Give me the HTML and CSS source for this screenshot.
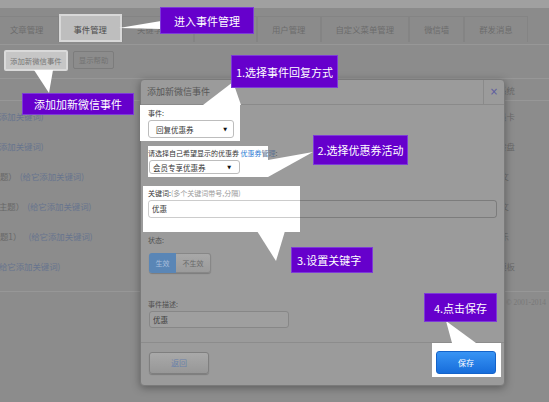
FILE: index.html
```html
<!DOCTYPE html>
<html lang="zh-CN">
<head>
<meta charset="utf-8">
<title>事件管理</title>
<link rel="stylesheet" href="styles.css">
</head>
<body>
<div class="page">
  <div class="topstrip"></div>
  <nav class="tabs">
    <span class="tab first">文章管理</span>
    <span class="tab active">事件管理</span>
    <span class="tab under">关键字</span>
    <span class="tab hidden-tab"></span>
    <span class="tab">用户管理</span>
    <span class="tab">自定义菜单管理</span>
    <span class="tab">微信墙</span>
    <span class="tab">群发消息</span>
  </nav>
  <div class="toolbar">
    <span class="btn spot">添加新微信事件</span>
    <span class="btn">显示帮助</span>
  </div>
  <div class="list">
    <div class="row head"><div class="cell-l"></div><div></div><div class="cell-r">系统</div></div>
    <div class="row"><div class="cell-l"><a class="kw in1">添加关键词)</a></div><div></div><div class="cell-r">会员卡</div></div>
    <div class="row"><div class="cell-l"><a class="kw in1">添加关键词)</a></div><div></div><div class="cell-r">大转盘</div></div>
    <div class="row"><div class="cell-l"><span class="t">题）</span><a class="kw gap">(给它添加关键词)</a></div><div></div><div class="cell-r far">图文</div></div>
    <div class="row"><div class="cell-l in1"><span class="t">主题）</span><a class="kw gap">(给它添加关键词)</a></div><div></div><div class="cell-r far">图文</div></div>
    <div class="row"><div class="cell-l"><span class="t">题1）</span><a class="kw gap wide">(给它添加关键词)</a></div><div></div><div class="cell-r far">音乐</div></div>
    <div class="row"><div class="cell-l"><a class="kw in1">给它添加关键词)</a></div><div></div><div class="cell-r">模板</div></div>
  </div>
  <div class="footer"><span class="copy">© 2001-2014</span></div>
</div>

<div class="modal">
  <div class="modal-head">
    <span class="modal-title">添加新微信事件</span>
    <span class="modal-close">×</span>
  </div>
  <div class="modal-body">
    <div class="field f1">
      <div class="flabel">事件:</div>
      <div class="select s1"><span>回复优惠券</span><span class="caret">▼</span></div>
    </div>
    <div class="field f2">
      <div class="flabel">请选择自己希望显示的优惠券 <a class="link">优惠券</a><span class="dimlink">管理</span><span class="dim">:</span></div>
      <div class="select s2"><span>会员专享优惠券</span><span class="caret">▼</span></div>
    </div>
    <div class="field f3">
      <div class="flabel">关键词:<span class="hint">(多个关键词带号,分隔)</span></div>
      <div class="input wide">优惠</div>
    </div>
    <div class="dlabel status">状态:</div>
    <div class="toggle"><span class="on">生效</span><span class="off">不生效</span></div>
    <div class="dlabel desc">事件描述:</div>
    <div class="input short">优惠</div>
  </div>
  <div class="modal-foot">
    <span class="btn-back">返回</span>
    <span class="save-spot"><span class="btn-save">保存</span></span>
  </div>
</div>

<svg class="pointers" width="549" height="402" viewBox="0 0 549 402">
  <polygon points="119,28 161,21 161,29" />
  <polygon points="34,70 53,70 49,93" />
  <polygon points="203,105 241,105 233,82" />
  <polygon points="268,160 268,177 313,152" />
  <polygon points="257,231 285,231 276,261" />
  <polygon points="446,321 452,343 476,343" />
</svg>

<div class="callout c1">进入事件管理</div>
<div class="callout c2">添加加新微信事件</div>
<div class="callout c3">1.选择事件回复方式</div>
<div class="callout c4">2.选择优惠券活动</div>
<div class="callout c5">3.设置关键字</div>
<div class="callout c6">4.点击保存</div>
</body>
</html>
```

FILE: styles.css
```css
* { box-sizing: border-box; margin: 0; padding: 0; }
html, body { width: 549px; height: 402px; overflow: hidden; }
body {
  position: relative;
  background: #8c8c8c;
  font-family: "Noto Sans CJK SC", "Noto Sans", "Liberation Sans", sans-serif;
  color: #666;
}
a { text-decoration: none; }

.page { width: 549px; height: 402px; }
.topstrip { height: 8px; background: #a0a0a0; }

.tabs {
  display: flex;
  height: 37px;
  padding-top: 8px;
  border-bottom: 1px solid #979797;
  background: #8b8b8b;
}
.tab {
  height: 26px;
  padding: 0 14px;
  border: 1px solid #848484;
  border-bottom: none;
  font-size: 8.4px;
  line-height: 25px;
  color: #6c6c6c;
  white-space: nowrap;
}
.tab.first { margin-left: -5px; }
.tab.under { width: 72px; padding-right: 0; }
.tab.hidden-tab { width: 63px; }
.tab.active {
  height: 28px;
  margin-top: -2px;
  padding: 0 13px;
  background: #bebebe;
  border: 2px solid #d8d8d8;
  color: #4c4c4c;
  line-height: 27px;
}

.toolbar {
  display: flex;
  align-items: flex-start;
  gap: 5px;
  height: 34px;
  padding: 5px 0 0 4px;
  border-bottom: 1px solid #979797;
}
.btn {
  height: 18px;
  margin-top: 1px;
  padding: 0 5px;
  border: 1px solid #7c7c7c;
  border-radius: 2px;
  font-size: 7.4px;
  line-height: 16px;
  color: #737373;
  white-space: nowrap;
}
.btn.spot {
  height: 21px;
  margin-top: 0;
  padding: 0 4px;
  background: #c6c6c6;
  border: 2px solid #dadada;
  line-height: 17px;
  color: #767676;
}

.list { padding-bottom: 10px; border-bottom: 1px solid #979797; }
.row {
  display: grid;
  grid-template-columns: 140px 300px 75px 1fr;
  height: 30px;
  align-items: center;
  font-size: 8.4px;
}
.row.head { height: 22px; border-bottom: 1px solid #979797; }
.cell-l { overflow: hidden; white-space: nowrap; }
.cell-r { text-align: right; color: #6a6a6a; white-space: nowrap; }
.cell-r.far { padding-right: 6px; }
.t { color: #686868; }
.kw { color: #67748e; }
.kw.gap { margin-left: 3px; }
.kw.wide { margin-left: 7px; }
.in1 { margin-left: -1px; }

.footer { padding: 5px 0 0 506px; font-family: "Liberation Serif", serif; font-size: 7.5px; line-height: 12px; color: #787878; white-space: nowrap; }

/* modal */
.modal {
  position: absolute;
  left: 140px;
  top: 79px;
  width: 365px;
  height: 307px;
  display: flex;
  flex-direction: column;
  background: #9b9b9b;
  border: 1px solid #7a7a7a;
  border-radius: 4px;
  box-shadow: 0 2px 8px rgba(0, 0, 0, 0.35);
}
.modal-head {
  display: flex;
  height: 25px;
  border-bottom: 1px solid #8a8a8a;
}
.modal-title { flex: 1; padding-left: 6px; font-size: 9px; line-height: 24px; color: #575757; }
.modal-close {
  width: 21px;
  border-left: 1px solid #8a8a8a;
  text-align: center;
  font-family: "DejaVu Sans", sans-serif;
  font-size: 10px;
  line-height: 23px;
  color: #5a5aa0;
}
.modal-body { padding: 0 7px 14px 7px; }
.field { background: #fff; }
.flabel { height: 10px; font-size: 7px; line-height: 10px; color: #333; white-space: nowrap; }
.f1 { width: 100px; margin-left: -8px; padding: 3px 0 3px 8px; }
.f2 { width: 120px; margin-top: 5px; padding: 2px 0 3px 0; }
.f3 { width: 157px; margin-top: 9px; margin-left: -5px; padding: 2px 0 14px 5px; }
.link { color: #2a78d2; }
.dimlink { color: #5f7391; }
.dim { color: #555; }
.hint { color: #9a9a9a; }
.select {
  display: flex;
  justify-content: space-between;
  align-items: center;
  margin-top: 2px;
  background: #fff;
  border: 1px solid #bdbdbd;
  border-radius: 3px;
  font-size: 7.5px;
  color: #333;
  white-space: nowrap;
}
.caret { font-family: "DejaVu Sans", sans-serif; font-size: 5px; color: #111; }
.s1 { width: 86px; height: 18px; padding: 0 6px 0 7px; }
.s2 { width: 91px; height: 14px; margin-left: 1px; padding: 0 8px 0 3px; }
.input {
  margin-top: 2px;
  border: 1px solid rgba(0, 0, 0, 0.2);
  border-radius: 3px;
  font-size: 7.5px;
  padding-left: 3px;
  color: #333;
  white-space: nowrap;
}
.input.wide { width: 349px; height: 18px; line-height: 16px; background: transparent; }
.input.short { width: 140px; height: 17px; line-height: 15px; margin-left: 1px; background: #9f9f9f; border-color: #878787; color: #3c3c3c; }
.dlabel { height: 10px; font-size: 7px; line-height: 10px; color: #505050; }
.status { margin-top: 3px; }
.desc { margin-top: 26px; }
.toggle {
  display: flex;
  width: fit-content;
  height: 20px;
  margin-top: 8px;
  margin-left: 1px;
  font-size: 7px;
  line-height: 20px;
  text-align: center;
  border-radius: 3px;
  box-shadow: 0 1px 1px rgba(0, 0, 0, 0.2);
}
.toggle .on { width: 27px; background: #5a86b6; color: #a8bfdc; border-radius: 3px 0 0 3px; }
.toggle .off {
  width: 35px;
  background: linear-gradient(#a8a8a8, #9b9b9b);
  border: 1px solid #878787;
  border-left: none;
  border-radius: 0 3px 3px 0;
  line-height: 18px;
  color: #696969;
}
.modal-foot {
  flex: 1;
  display: flex;
  justify-content: space-between;
  align-items: flex-start;
  padding: 0 3px 0 8px;
  border-top: 1px solid #8c8c8c;
}
.btn-back {
  width: 60px;
  height: 22px;
  margin-top: 9px;
  border: 1px solid #7f7f7f;
  border-radius: 3px;
  background: linear-gradient(#a9a9a9, #979797);
  box-shadow: 0 1px 1px rgba(0, 0, 0, 0.2);
  font-size: 8px;
  line-height: 20px;
  text-align: center;
  color: #6a81aa;
}
.save-spot { background: #fff; padding: 8px 5px 3px 4px; }
.btn-save {
  display: block;
  width: 60px;
  height: 23px;
  border: 1px solid #1463c9;
  border-radius: 3px;
  background: linear-gradient(#3894f4, #176ddb);
  font-size: 8px;
  line-height: 21px;
  text-align: center;
  color: #fff;
}

/* tutorial overlays */
.pointers { position: absolute; left: 0; top: 0; pointer-events: none; }
.pointers polygon { fill: #fff; }
.callout {
  position: absolute;
  display: flex;
  align-items: center;
  justify-content: center;
  background: #6600cc;
  border: 1px solid #7d3bd8;
  color: #fff;
  font-size: 11px;
  white-space: nowrap;
}
.c1 { left: 160px; top: 7px; width: 94px; height: 27px; }
.c2 { left: 22px; top: 93px; width: 112px; height: 22px; }
.c3 { left: 231px; top: 55px; width: 107px; height: 33px; }
.c4 { left: 313px; top: 135px; width: 95px; height: 30px; }
.c5 { left: 291px; top: 247px; width: 82px; height: 26px; justify-content: flex-start; padding-left: 5px; }
.c6 { left: 424px; top: 293px; width: 73px; height: 29px; }
```
